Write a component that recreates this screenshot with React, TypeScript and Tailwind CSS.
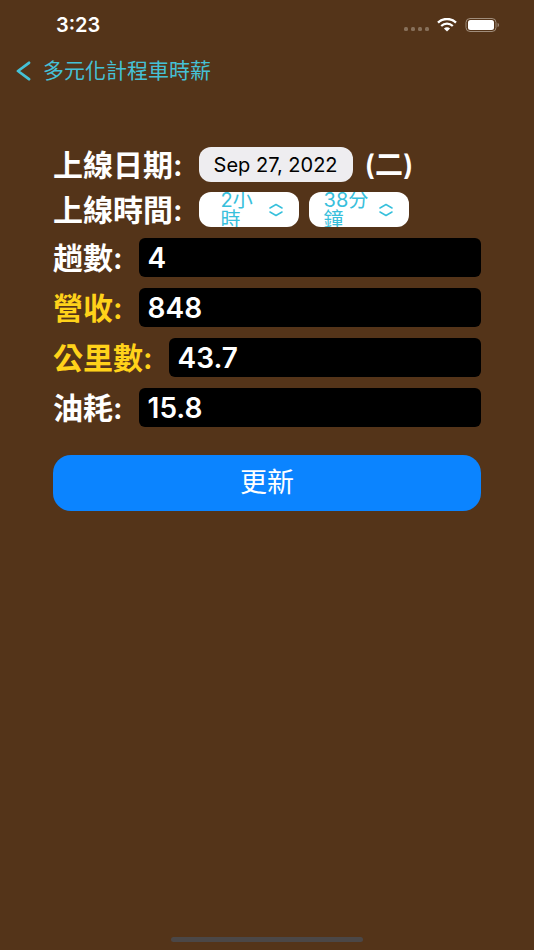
import React, { useState } from "react";
import clsx from "clsx";

const hourOptions = Array.from({ length: 24 }, (_, i) => `${i}小時`);
const minuteOptions = Array.from({ length: 60 }, (_, i) => `${i}分鐘`);

function StatusBar() {
    return (
        <div className="flex h-[50px] items-center justify-between pl-[56px] pr-[34px]">
            <span className="text-[20px] font-semibold">3:23</span>
            <div className="flex items-center gap-2">
                <svg width="25" height="16" viewBox="0 0 25 16" fill="#87705a">
                    <rect x="0" y="10" width="4" height="4" rx="1.5" />
                    <rect x="7" y="10" width="4" height="4" rx="1.5" />
                    <rect x="14" y="10" width="4" height="4" rx="1.5" />
                    <rect x="21" y="10" width="4" height="4" rx="1.5" />
                </svg>
                <svg width="20" height="14" viewBox="0 0 20 14" fill="none">
                    <path d="M1 4.6C6 -0.2 14 -0.2 19 4.6" stroke="white" strokeWidth="2.4" />
                    <path d="M4.2 8C7.5 4.9 12.5 4.9 15.8 8" stroke="white" strokeWidth="2.3" />
                    <path d="M10 13.4L6.9 10.4C8.7 8.9 11.3 8.9 13.1 10.4Z" fill="white" />
                </svg>
                <svg width="35" height="14" viewBox="0 0 35 14" fill="none">
                    <rect x="1" y="0.5" width="30" height="13" rx="4" stroke="#a08d7b" />
                    <rect x="3" y="2" width="26" height="10" rx="2.5" fill="white" />
                    <path d="M32.6 4.8C34.5 5.6 34.5 8.4 32.6 9.2Z" fill="#a08d7b" />
                </svg>
            </div>
        </div>
    );
}

interface DurationPickerProps {
    label: string;
    value: string;
    options: string[];
    onChange: (value: string) => void;
}

function DurationPicker({ label, value, options, onChange }: DurationPickerProps) {
    return (
        <label
            className={clsx(
                "relative flex h-[35px] w-[100px] items-center overflow-hidden rounded-xl bg-white pr-4 text-[#38c0dc]",
                value.length > 3 ? "pl-[15px]" : "pl-[22px]"
            )}
        >
            <span className="flex-1 text-[20px] leading-5 break-all">{value}</span>
            <svg
                className="shrink-0"
                width="14"
                height="14"
                viewBox="0 0 14 14"
                fill="none"
                stroke="currentColor"
                strokeWidth="1.5"
                strokeLinecap="round"
                strokeLinejoin="round"
            >
                <path d="M1 5L7 1.5L13 5" />
                <path d="M1 9L7 12.5L13 9" />
            </svg>
            <select
                aria-label={label}
                value={value}
                onChange={(e) => onChange(e.target.value)}
                className="absolute inset-0 cursor-pointer opacity-0"
            >
                {options.map((option) => (
                    <option key={option} value={option}>
                        {option}
                    </option>
                ))}
            </select>
        </label>
    );
}

interface FieldProps {
    name: string;
    label: string;
    value: string;
    highlight?: boolean;
    onChange: (e: React.ChangeEvent<HTMLInputElement>) => void;
}

function Field({ name, label, value, highlight, onChange }: FieldProps) {
    return (
        <div className="flex items-center gap-4">
            <label
                htmlFor={name}
                className={clsx(
                    "shrink-0 pt-px text-[30px] leading-[38px] font-semibold",
                    highlight && "text-[#ffd21a]"
                )}
            >
                {label}:
            </label>
            <input
                id={name}
                name={name}
                type="text"
                inputMode="decimal"
                value={value}
                onChange={onChange}
                className="h-[39px] w-full min-w-0 flex-1 rounded-md bg-black px-[9px] text-[28px] font-semibold text-white focus:outline-none"
            />
        </div>
    );
}

export default function App() {
    const [hours, setHours] = useState("2小時");
    const [minutes, setMinutes] = useState("38分鐘");
    const [formData, setFormData] = useState({
        trips: "4",
        revenue: "848",
        distance: "43.7",
        fuel: "15.8",
    });

    const handleChange = (e: React.ChangeEvent<HTMLInputElement>) => {
        const { name, value } = e.target;
        setFormData((prev) => ({ ...prev, [name]: value }));
    };

    return (
        <div className="flex min-h-screen flex-col bg-[#543419] font-['Inter','Noto_Sans_CJK_TC',sans-serif] text-white">
            <StatusBar />

            <nav className="px-4 pt-[5px]">
                <a href="#" className="inline-flex items-center gap-3 text-[#45c1d6]">
                    <svg
                        width="15"
                        height="20"
                        viewBox="0 0 15 20"
                        fill="none"
                        stroke="currentColor"
                        strokeWidth="2.8"
                        strokeLinecap="round"
                        strokeLinejoin="round"
                    >
                        <path d="M13 1.8L2 10L13 18.2" />
                    </svg>
                    <span className="text-[21px] leading-8">多元化計程車時薪</span>
                </a>
            </nav>

            <form
                onSubmit={(e) => e.preventDefault()}
                className="flex flex-col px-[53px] pt-[60px]"
            >
                <div className="flex items-center gap-4">
                    <span className="pt-px text-[30px] leading-[34px] font-semibold">上線日期:</span>
                    <div className="flex items-center gap-3">
                        <button
                            type="button"
                            className="h-[35px] rounded-xl bg-[#eeedf0] px-[15px] text-[20px] whitespace-nowrap text-black"
                        >
                            Sep 27, 2022
                        </button>
                        <span className="pt-px text-[28px] leading-[34px] font-semibold">(二)</span>
                    </div>
                </div>

                <div className="mt-[10px] flex items-center gap-4">
                    <span className="pt-px text-[30px] leading-[34px] font-semibold">上線時間:</span>
                    <div className="flex gap-[10px]">
                        <DurationPicker
                            label="小時"
                            value={hours}
                            options={hourOptions}
                            onChange={setHours}
                        />
                        <DurationPicker
                            label="分鐘"
                            value={minutes}
                            options={minuteOptions}
                            onChange={setMinutes}
                        />
                    </div>
                </div>

                <div className="mt-[11px] flex flex-col gap-[11px]">
                    <Field name="trips" label="趟數" value={formData.trips} onChange={handleChange} />
                    <Field name="revenue" label="營收" value={formData.revenue} onChange={handleChange} highlight />
                    <Field name="distance" label="公里數" value={formData.distance} onChange={handleChange} highlight />
                    <Field name="fuel" label="油耗" value={formData.fuel} onChange={handleChange} />
                </div>

                <button
                    type="submit"
                    className="mt-7 h-14 rounded-[18px] bg-[#0b84ff] pt-px text-[27px] text-white"
                >
                    更新
                </button>
            </form>

            <div className="mt-auto flex justify-center pb-2">
                <div className="h-[5px] w-[36%] rounded-full bg-[#4b4747]" />
            </div>
        </div>
    );
}
